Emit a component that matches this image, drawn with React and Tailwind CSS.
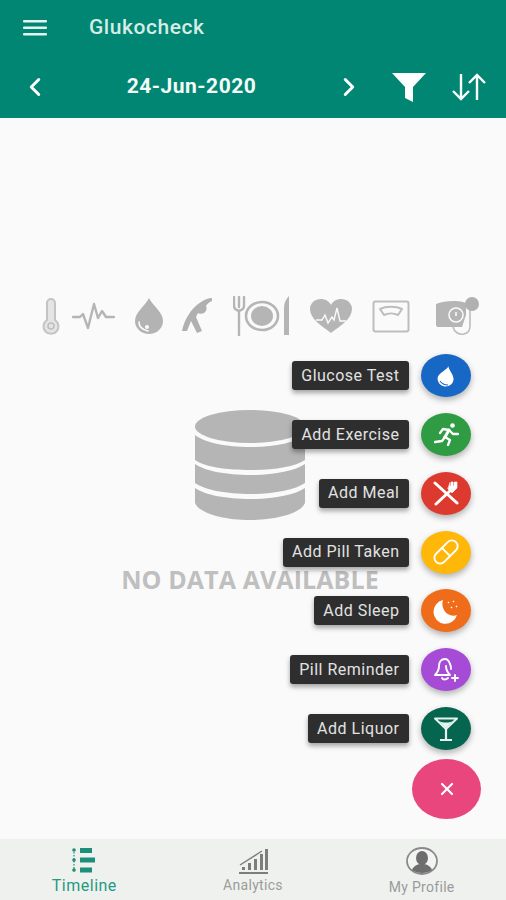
import { ChevronLeft, ChevronRight, Pill, X } from 'lucide-react';

const Thermometer = () => (
  <svg width="18" height="37" viewBox="0 0 18 37" fill="none">
    <path d="M5 22V5a4 4 0 0 1 8 0v17a7.5 7.5 0 1 1-8 0z" fill="#e4e4e4" stroke="#c4c4c4" strokeWidth="2" />
    <circle cx="9" cy="28" r="3" fill="none" stroke="#bdbdbd" strokeWidth="1.5" />
  </svg>
);

const Pulse = () => (
  <svg width="43" height="28" viewBox="0 0 43 28" fill="none">
    <path d="M1 15h7l3-3 5 14 6-24 4 14 4-7 4 6h8" stroke="#b5b5b5" strokeWidth="2.4" strokeLinejoin="round" strokeLinecap="round" />
  </svg>
);

const Drop = () => (
  <svg width="30" height="36" viewBox="0 0 30 36">
    <path d="M15 0C11 8 1 14 1 23a14 13 0 0 0 28 0C29 14 19 8 15 0z" fill="#b3b3b3" />
    <path d="M5 24c0 5 4 8 9 9" fill="none" stroke="#fafafa" strokeWidth="1.6" strokeLinecap="round" />
    <circle cx="13" cy="29" r="2" fill="#fafafa" />
  </svg>
);

const Yoga = () => (
  <svg width="32" height="38" viewBox="0 0 32 38">
    <path d="M1 34C3 24 9 12 20 5c3-2 7-4 11-4v3c-3 1-5 3-6 5 1 2 1 5-2 7-2 1-5 1-6 0l-2 4 6 14-5 2-6-12-4 10z" fill="#b0b0b0" />
  </svg>
);

const Plate = () => (
  <svg width="57" height="40" viewBox="0 0 57 40" fill="none">
    <path d="M1 1v9c0 3 2 4 5 5v24M6 1v10M11 1v9c0 3-2 4-5 5" stroke="#b5b5b5" strokeWidth="2.4" strokeLinecap="round" />
    <ellipse cx="29" cy="20" rx="16" ry="14" stroke="#b5b5b5" strokeWidth="2.6" />
    <ellipse cx="29" cy="20" rx="11" ry="10" fill="#b5b5b5" />
    <path d="M51 39V12c0-5 2-9 5-12v39z" fill="#b5b5b5" />
  </svg>
);

const Heart = () => (
  <svg width="42" height="34" viewBox="0 0 42 34">
    <path d="M21 34C12 27 0 20 0 10 0 4 5 0 11 0c4 0 8 2 10 6 2-4 6-6 10-6 6 0 11 4 11 10 0 10-12 17-21 24z" fill="#b5b5b5" />
    <path d="M6 21h6l3-5 3 8 4-6 2 3 3-12 3 13h6" fill="none" stroke="#fafafa" strokeWidth="1.4" />
  </svg>
);

const Scale = () => (
  <svg width="38" height="33" viewBox="0 0 38 33" fill="none">
    <rect x="1.5" y="1.5" width="35" height="30" rx="2" stroke="#bdbdbd" strokeWidth="2" />
    <path d="M8 9c6-3 16-3 22 0l-4 6c-4-2-10-2-14 0z" stroke="#bdbdbd" strokeWidth="2" strokeLinejoin="round" />
  </svg>
);

const BpMonitor = () => (
  <svg width="44" height="39" viewBox="0 0 44 39" fill="none">
    <path d="M1 7c7-3 19-4 27-2 2 0 3 1 3 3v10l-2 6-2 6H3c-1 0-2-1-2-2z" fill="#b5b5b5" />
    <circle cx="21" cy="18" r="7" fill="#b5b5b5" stroke="#fafafa" strokeWidth="1.6" />
    <path d="M21 15v4" stroke="#fafafa" strokeWidth="1.6" />
    <path d="M18 30c1 5 6 8 11 7 5-1 6-4 6-8V12" stroke="#bdbdbd" strokeWidth="1.6" />
    <circle cx="37" cy="7" r="7" fill="#b0b0b0" />
  </svg>
);

const Database = () => (
  <svg width="110" height="110" viewBox="0 0 110 110" fill="#b5b5b5">
    <ellipse cx="55" cy="16.5" rx="55" ry="16.5" />
    <path d="M0 25c10 8 32 12 55 12s45-4 55-12v25c-10 7-32 10-55 10S10 57 0 50z" />
    <path d="M0 54c10 7 32 11 55 11s45-4 55-11v19c-10 7-32 11-55 11S10 80 0 73z" />
    <path d="M0 78c10 7 32 11 55 11s45-4 55-11v15c-4 10-28 17-55 17S4 103 0 93z" />
  </svg>
);

const GlucoseDrop = () => (
  <svg width="22" height="22" viewBox="0 0 22 22">
    <path d="M12 1c-1 4-9 8-9 13a8 7.5 0 0 0 16 0c0-5-6-9-7-13z" fill="#fff" transform="rotate(8 11 11)" />
    <path d="M5 16c2 3 5 4 8 4" fill="none" stroke="#1767c4" strokeWidth="1.2" />
  </svg>
);

const Runner = () => (
  <svg width="25" height="23" viewBox="0 0 25 23" fill="none" stroke="#fff" strokeWidth="2.3" strokeLinecap="round" strokeLinejoin="round">
    <circle cx="18.500" cy="2.500" r="2.300" fill="#fff" stroke="none" />
    <path d="M15 7l-4 7" strokeWidth="3" />
    <path d="M15 7L9 6 6 10" />
    <path d="M15 7l4 4h5" />
    <path d="M11 14l5 3-2 5" />
    <path d="M11 14l-3 4-7 1" />
  </svg>
);

const MealIcon = () => (
  <svg width="26" height="26" viewBox="0 0 26 26" fill="none" stroke="#fff" strokeLinecap="round">
    <path d="M2 3l22 20" strokeWidth="3" />
    <path d="M18 10L3 24" strokeWidth="3" />
    <path d="M15 9l4 4 5-5V2h-3v4h-1V2h-2v4h-1V3z" fill="#fff" strokeWidth="0.6" />
  </svg>
);

const Moon = () => (
  <svg width="28" height="28" viewBox="0 0 28 28">
    <path d="M11 3a12 12 0 1 0 14 15c-2 1-5 1-7 0-6-2-9-9-7-15z" fill="#fff" />
    <path d="M16 5l1 1M21 4l1 1M24 9l1 1M19 10l1 1" fill="none" stroke="#fff" strokeWidth="1.4" />
  </svg>
);

const BellIcon = () => (
  <svg width="26" height="26" viewBox="0 0 26 26" fill="none" stroke="#fff" strokeWidth="1.9" strokeLinejoin="round" strokeLinecap="round">
    <path d="M12 2c-4 0-6 3-6 7 0 5-2 7-4 9h15c-2-2-4-4-4-9" />
    <path d="M12 2c2 0 4 2 5 5 1 2 1 4 1 5" />
    <path d="M9 21c1 2 4 2 6 0" />
    <path d="M22 18v6M19 21h6" />
  </svg>
);

const LiquorIcon = () => (
  <svg width="26" height="24" viewBox="0 0 26 24" fill="none" stroke="#e8f2ef" strokeLinejoin="round">
    <path d="M2 1.5h22L13 12z" strokeWidth="2" />
    <path d="M6 4c4 2 10 2 14 0l-7 7z" fill="#e8f2ef" strokeWidth="0" />
    <path d="M13 12v10" strokeWidth="2.2" />
    <path d="M7 23h12" strokeWidth="2" />
  </svg>
);

const actions = [
  { label: 'Glucose Test', color: 'bg-[#1767c4]', icon: <GlucoseDrop /> },
  { label: 'Add Exercise', color: 'bg-[#2f9c43]', icon: <Runner /> },
  { label: 'Add Meal', color: 'bg-[#dc3a2f]', icon: <MealIcon /> },
  { label: 'Add Pill Taken', color: 'bg-[#ffb70a]', icon: <Pill size={28} color="#fff" strokeWidth={1.6} /> },
  { label: 'Add Sleep', color: 'bg-[#ef6c1a]', icon: <Moon /> },
  { label: 'Pill Reminder', color: 'bg-[#a54bd6]', icon: <BellIcon /> },
  { label: 'Add Liquor', color: 'bg-[#05654f]', icon: <LiquorIcon /> },
];

const App = () => {
  return (
    <div className="relative flex h-[900px] w-[506px] flex-col overflow-hidden bg-[#fafafa] font-['Roboto',sans-serif]">
      <header className="h-[118px] shrink-0 bg-[#008672]">
        <div className="flex h-[56px] items-center pl-[23px]">
          <svg width="24" height="16" viewBox="0 0 24 16" fill="#e6f4f0">
            <rect width="24" height="2.6" rx="1" />
            <rect y="6.5" width="24" height="2.6" rx="1" />
            <rect y="13" width="24" height="2.6" rx="1" />
          </svg>
          <span className="ml-[42px] text-[21px] font-medium tracking-[0.55px] text-[#d6ece6]">Glukocheck</span>
        </div>
        <div className="flex h-[62px] items-center pl-[20px]">
          <ChevronLeft size={30} color="#fff" strokeWidth={2.4} />
          <span className="ml-[76px] w-[131px] text-center text-[21px] font-bold tracking-[0.5px] text-[#f4fbf9]">24-Jun-2020</span>
          <ChevronRight size={30} color="#fff" strokeWidth={2.4} className="ml-[77px]" />
          <svg width="34" height="30" viewBox="0 0 34 30" className="ml-[28px]">
            <path d="M0 1h34L21 15v15l-8-4V15z" fill="#fff" />
          </svg>
          <svg width="34" height="28" viewBox="0 0 34 28" fill="none" stroke="#fff" strokeWidth="2.4" className="ml-[26px]">
            <path d="M9 1v25M1 18l8 8 8-8" />
            <path d="M25 27V2M17 10l8-8 8 8" />
          </svg>
        </div>
      </header>

      <main className="flex flex-1 flex-col">
        <div className="mt-[177px] flex h-[42px] items-center">
          <div className="ml-[42px]"><Thermometer /></div>
          <div className="ml-[12px]"><Pulse /></div>
          <div className="ml-[19px]"><Drop /></div>
          <div className="ml-[17px]"><Yoga /></div>
          <div className="ml-[20px]"><Plate /></div>
          <div className="ml-[20px]"><Heart /></div>
          <div className="ml-[20px]"><Scale /></div>
          <div className="ml-[25px]"><BpMonitor /></div>
        </div>
        <div className="mt-[73px] flex justify-center pr-[6px]">
          <Database />
        </div>
        <p className="mt-[44px] pr-[6px] text-center font-['Open_Sans',sans-serif] text-[25px] leading-[30px] font-bold tracking-[0.1px] text-[#bfbfbf]">
          NO DATA AVAILABLE
        </p>
      </main>

      <nav className="grid h-[61px] shrink-0 grid-cols-3 bg-[#eff1ef]">
        <button className="flex flex-col items-center pt-[8px]">
          <svg width="26" height="26" viewBox="0 0 26 26">
            <path d="M3 2v24" stroke="#1b8f7a" strokeWidth="1.2" strokeDasharray="1.5 1.5" />
            <circle cx="3" cy="3" r="1.8" fill="#1b8f7a" />
            <circle cx="3" cy="13" r="1.8" fill="#1b8f7a" />
            <circle cx="3" cy="23" r="1.8" fill="#1b8f7a" />
            <rect x="9" y="1" width="12" height="5" fill="#1b8f7a" />
            <rect x="9" y="10.500" width="15" height="5" fill="#1b8f7a" />
            <rect x="9" y="20.500" width="12" height="5" fill="#1b8f7a" />
          </svg>
          <span className="mt-[3px] text-[16px] leading-[20px] tracking-[0.5px] text-[#1f9a83]">Timeline</span>
        </button>
        <button className="flex flex-col items-center pt-[9px]">
          <svg width="30" height="26" viewBox="0 0 30 26" fill="#7d7d7d">
            <path d="M1 24h29v2H1z" />
            <path d="M4 22v-3h3v3zM10 22v-7h3v7zM16 22V11h3v11zM22 22V6h3v16zM27 22V1h3v21z" />
            <path d="M2 17L24 3" stroke="#7d7d7d" strokeWidth="1.4" />
          </svg>
          <span className="mt-[2px] text-[14px] leading-[18px] tracking-[0.3px] text-[#9b9b9b]">Analytics</span>
        </button>
        <button className="flex flex-col items-center pt-[8px]">
          <svg width="32" height="28" viewBox="0 0 32 28">
            <ellipse cx="16" cy="14" rx="15" ry="13" fill="#f4f4f4" stroke="#8a8a8a" strokeWidth="1.8" />
            <ellipse cx="16" cy="11" rx="6" ry="7" fill="#6e6e6e" />
            <path d="M6 23c2-5 6-6 10-6s8 1 10 6c-5 4-15 4-20 0z" fill="#6e6e6e" />
          </svg>
          <span className="mt-[3px] text-[14px] leading-[18px] tracking-[0.3px] text-[#9b9b9b]">My Profile</span>
        </button>
      </nav>

      <div className="absolute right-[25px] bottom-[81px] flex flex-col items-end">
        <div className="mr-[10px] flex flex-col items-end gap-[15.8px]">
          {actions.map((action) => (
            <div key={action.label} className="flex items-center gap-[12px]">
              <span className="flex h-[29px] items-center rounded-[3px] bg-[#2e2e2e] pr-[9.500px] pl-[9px] text-[16px] tracking-[0.5px] text-[#e2e2e2] shadow-[0_3px_5px_rgba(0,0,0,0.35)]">
                {action.label}
              </span>
              <span className={`flex h-[43px] w-[50px] items-center justify-center rounded-[50%] shadow-[0_3px_6px_rgba(0,0,0,0.3)] ${action.color}`}>
                {action.icon}
              </span>
            </div>
          ))}
        </div>
        <button className="mt-[9px] flex h-[60px] w-[69px] items-center justify-center rounded-[50%] bg-[#e8467c]">
          <X size={20} color="#fff" strokeWidth={2.6} />
        </button>
      </div>
    </div>
  );
};

export default App;
